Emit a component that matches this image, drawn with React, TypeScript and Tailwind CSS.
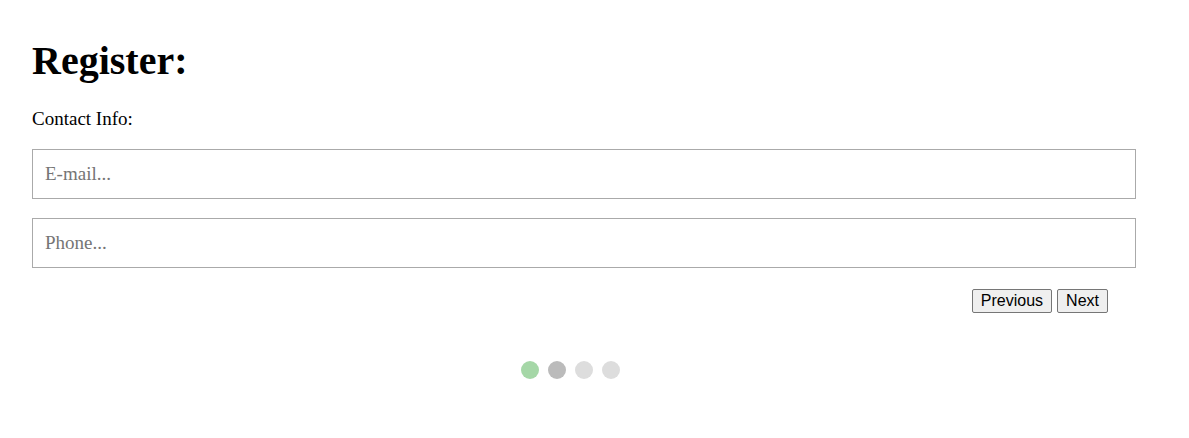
import React from "react";

const steps = ["finish", "active", "idle", "idle"];

const App = () => {
  return (
    <div className="min-h-[438px] bg-white pl-[32px] font-['Liberation_Serif',serif] text-black">
      <div className="w-[1076px]">
        {/* Title */}
        <h1 className="pt-[37px] text-[40px] font-bold leading-[48px]">
          Register:
        </h1>

        <div className="mt-[22px] text-[19px] leading-[24px]">
          Contact Info:
        </div>

        {/* Fields */}
        <div className="mt-[18px] flex flex-col gap-[19px]">
          <input
            placeholder="E-mail..."
            className="h-[50px] w-[1104px] border border-[#aaaaaa] px-[12px] text-[19px] outline-none placeholder:text-[#757575]"
          />
          <input
            placeholder="Phone..."
            className="h-[50px] w-[1104px] border border-[#aaaaaa] px-[12px] text-[19px] outline-none placeholder:text-[#757575]"
          />
        </div>

        {/* Buttons */}
        <div className="mt-[21px] flex justify-end gap-[5px] font-['Liberation_Sans',Arial,sans-serif]">
          <button className="h-[24px] rounded-[2px] border border-[#767676] bg-[#efefef] px-[8px] text-[16px] leading-none">
            Previous
          </button>
          <button className="h-[24px] rounded-[2px] border border-[#767676] bg-[#efefef] px-[8px] text-[16px] leading-none">
            Next
          </button>
        </div>

        {/* Step dots */}
        <div className="mt-[48px] flex justify-center gap-[9px]">
          {steps.map((s, i) => (
            <span
              key={i}
              className={
                s === "finish"
                  ? "h-[18px] w-[18px] rounded-full bg-[#a5d7a7]"
                  : s === "active"
                  ? "h-[18px] w-[18px] rounded-full bg-[#bbbbbb]"
                  : "h-[18px] w-[18px] rounded-full bg-[#dddddd]"
              }
            />
          ))}
        </div>
      </div>
    </div>
  );
};

export default App;
